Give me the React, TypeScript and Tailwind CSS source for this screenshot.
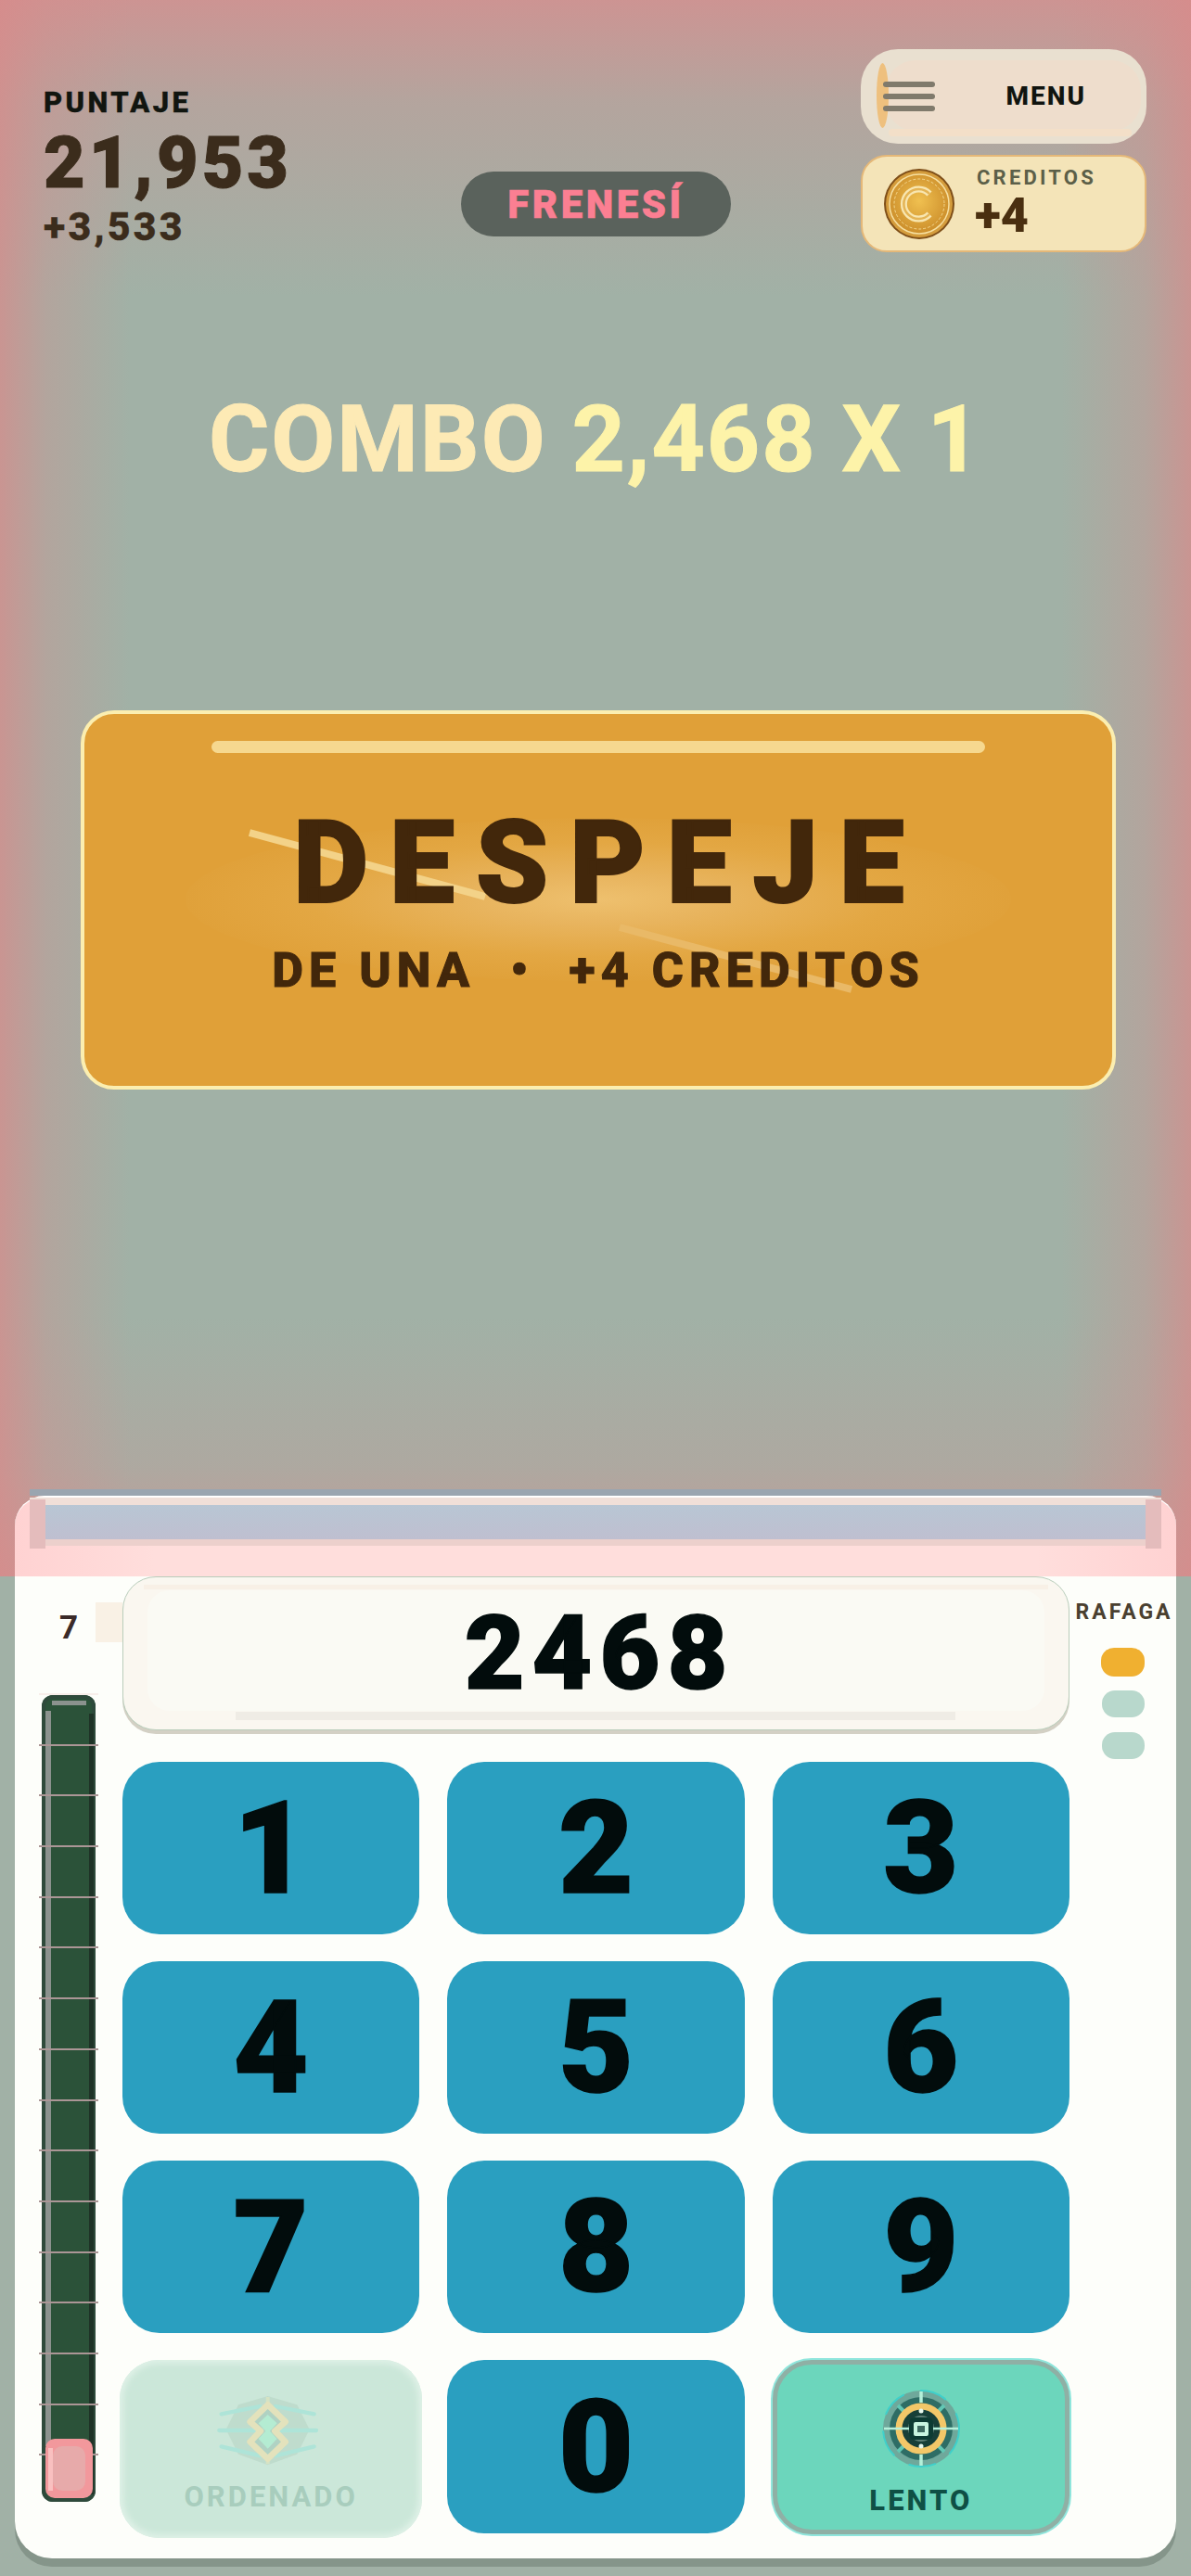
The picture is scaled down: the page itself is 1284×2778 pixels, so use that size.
// Pantalla de juego: HUD, aviso de despeje y teclado numerico
const KEYS = ["1", "2", "3", "4", "5", "6", "7", "8", "9"];
const METER_LINES = Array.from({ length: 16 }, (_, i) => i);

function Coin() {
  return (
    <svg width="78" height="78" viewBox="0 0 78 78" className="shrink-0">
      <defs>
        <radialGradient id="coinFill" cx="50%" cy="45%" r="60%">
          <stop offset="0%" stopColor="#f0c050" />
          <stop offset="100%" stopColor="#c98a28" />
        </radialGradient>
      </defs>
      <circle cx="39" cy="39" r="38" fill="#7e4e18" />
      <circle cx="39" cy="39" r="36" fill="#d49c3c" />
      <circle cx="39" cy="39" r="32" fill="url(#coinFill)" stroke="#f6dfa0" strokeWidth="1.5" />
      <circle cx="39" cy="39" r="27" fill="none" stroke="#f3d78f" strokeWidth="1" strokeDasharray="3 2" />
      <path d="M50 28 A16 16 0 1 0 50 50" fill="none" stroke="#f8e6b0" strokeWidth="7" strokeLinecap="butt" />
      <path d="M50 28 A16 16 0 1 0 50 50" fill="none" stroke="#e4b455" strokeWidth="2.5" />
    </svg>
  );
}

function OrdenadoIcon() {
  return (
    <svg width="150" height="100" viewBox="0 0 450 300" className="block">
      <polygon points="80,150 120,70 215,42 310,70 350,150 310,230 215,265 120,230" fill="#bfdccd" />
      <g stroke="#aee4d8" strokeWidth="13" strokeLinecap="round">
        <line x1="65" y1="100" x2="190" y2="75" />
        <line x1="365" y1="100" x2="240" y2="75" />
        <line x1="58" y1="153" x2="372" y2="153" />
        <line x1="65" y1="205" x2="190" y2="235" />
        <line x1="365" y1="205" x2="240" y2="235" />
      </g>
      <line x1="215" y1="45" x2="215" y2="262" stroke="#d5e3c4" strokeWidth="12" />
      <polygon
        points="215,70 272,125 238,155 272,190 215,245 158,190 192,155 158,125"
        fill="#b0d2c3"
        stroke="#e3e2bc"
        strokeWidth="20"
        strokeLinejoin="round"
      />
      <polygon points="215,102 245,130 222,155 245,180 215,212 185,180 208,155 185,130" fill="#b4ecd2" />
    </svg>
  );
}

function LentoIcon() {
  return (
    <svg width="86" height="86" viewBox="9 9 86 86" className="block">
      <circle cx="52" cy="52" r="41" fill="#6fa89b" />
      <circle cx="52" cy="52" r="41" fill="none" stroke="#3fd0cb" strokeWidth="2" strokeDasharray="30 18" />
      <circle cx="52" cy="52" r="34" fill="#2e6d65" />
      <g stroke="#62c7b4" strokeWidth="4">
        <line x1="27" y1="27" x2="36" y2="36" />
        <line x1="77" y1="27" x2="68" y2="36" />
        <line x1="27" y1="77" x2="36" y2="68" />
        <line x1="77" y1="77" x2="68" y2="68" />
      </g>
      <circle cx="52" cy="52" r="24" fill="#173f38" stroke="#f3c768" strokeWidth="7" />
      <circle cx="52" cy="52" r="14" fill="#5d7f76" />
      <g stroke="#b5f0da" strokeWidth="3.5">
        <line x1="52" y1="12" x2="52" y2="24" />
        <line x1="52" y1="80" x2="52" y2="92" />
        <line x1="12" y1="52" x2="92" y2="52" strokeWidth="2.5" />
      </g>
      <circle cx="52" cy="33" r="2.5" fill="#e8f8ee" />
      <circle cx="52" cy="71" r="2.5" fill="#e8f8ee" />
      <rect x="39" y="40" width="26" height="24" rx="6" fill="#0d3b33" />
      <rect x="44" y="45" width="16" height="15" rx="2" fill="#c8f5e0" />
      <rect x="48" y="49" width="8" height="7" fill="#3d6a60" />
    </svg>
  );
}

function Meter() {
  return (
    <div className="relative mt-[52px] h-[870px] w-[58px] overflow-visible rounded-[12px] bg-[#2b5239] shadow-[inset_0_0_0_4px_#2e4a3b]">
      <div className="absolute left-[4px] top-[17px] bottom-[60px] w-[6px] bg-[#8b928e]" />
      <div className="absolute left-[11px] top-[6px] h-[5px] w-[37px] bg-[#8b928e]" />
      <div className="absolute right-[2px] top-[20px] bottom-[8px] w-[5px] bg-[#1f3327]" />
      {/* marcas de la barra */}
      <div className="absolute -left-[3px] -right-[3px] -top-[2px] flex flex-col gap-[52.7px]">
        {METER_LINES.map((n) => (
          <div key={n} className={n === 0 ? "h-[2px] bg-[#f8eeea]" : "h-[2px] bg-[#ab9696]"} />
        ))}
      </div>
      {/* nivel */}
      <div className="absolute bottom-[4px] left-[4px] right-[3px] h-[64px] rounded-[10px] bg-[#f2989c] p-[8px]">
        <div className="h-full rounded-[10px] bg-[#e7aaaa]" />
        <div className="absolute left-[3px] top-[10px] h-[46px] w-[5px] bg-[#f9c0c0]" />
      </div>
    </div>
  );
}

export default function App() {
  return (
    <div className="flex h-[2778px] w-[1284px] flex-col overflow-hidden bg-[#a1b1a6] font-['Roboto',sans-serif]">
      {/* Zona superior con vineta roja */}
      <section className="flex h-[1700px] flex-col bg-[linear-gradient(to_right,#d98a8ab8,#d98a8a50_50px,#d98a8a00_140px),linear-gradient(to_left,#d98a8ab8,#d98a8a50_50px,#d98a8a00_140px),linear-gradient(to_bottom,#d39090e0,#d3909060_110px,#d3909000_320px),linear-gradient(to_top,#d39090c0,#d3909040_120px,#d3909000_280px)]">
        {/* HUD */}
        <div className="flex items-start pt-[53px]">
          <div className="ml-[47px] w-[450px] pt-[43px] text-[#3b2c1c]">
            <div className="text-[31px] font-extrabold leading-[30px] tracking-[3.4px] text-[#11150f] [-webkit-text-stroke:0.5px]">PUNTAJE</div>
            <div className="mt-[12px] text-[77px] font-black leading-[76px] tracking-[4px] [-webkit-text-stroke:1px]">21,953</div>
            <div className="mt-[9px] text-[43px] font-extrabold leading-[42px] tracking-[3.2px] [-webkit-text-stroke:0.5px]">+3,533</div>
          </div>
          <div className="mt-[132px] flex h-[70px] w-[291px] items-center justify-center rounded-full bg-[#5a625c] text-[42px] font-black tracking-[3.5px] text-[#fb7f92] [-webkit-text-stroke:0.5px]">
            FRENESÍ
          </div>
          <div className="ml-[140px] flex w-[308px] flex-col gap-[12px]">
            <div className="relative flex h-[102px] items-center justify-end rounded-[40px] bg-[#e9e0d0] pr-[65px]">
              <div className="absolute bottom-[14px] left-[27px] right-[6px] top-[12px] rounded-[32px] bg-[#eeddcc]" />
              <div className="absolute bottom-[8px] left-[30px] right-[16px] h-[8px] rounded-full bg-[#f3dfc8]" />
              <div className="absolute bottom-[17px] left-[17px] top-[15px] w-[13px] rounded-[50%] bg-[#eec07e]" />
              <div className="absolute left-[24px] top-[35px] flex w-[56px] flex-col gap-[7px]">
                <div className="h-[6px] rounded-full bg-[#807a6c]" />
                <div className="h-[6px] rounded-full bg-[#807a6c]" />
                <div className="h-[6px] rounded-full bg-[#807a6c]" />
              </div>
              <span className="relative text-[28px] font-extrabold tracking-[2px] text-[#10140f]">MENU</span>
            </div>
            <div className="flex h-[105px] items-center gap-[21px] rounded-[28px] border-2 border-[#e5b878] bg-[#f4e4b8] pl-[22px]">
              <Coin />
              <div className="-mt-[2px]">
                <div className="ml-[2px] text-[22px] font-bold leading-[24px] tracking-[3.2px] text-[#5c5f48]">CREDITOS</div>
                <div className="mt-[4px] text-[52px] font-black leading-[50px] text-[#4a2f10]">+4</div>
              </div>
            </div>
          </div>
        </div>

        {/* Combo */}
        <div className="mt-[147px] text-center text-[100px] font-bold leading-[110px] tracking-[2px] text-[#fdeab5] [-webkit-text-stroke:1px]">
          COMBO <span className="text-[#fdf3a9]">2,468 X 1</span>
        </div>

        {/* Tarjeta de despeje */}
        <div className="relative ml-[87px] mt-[237px] h-[409px] w-[1116px] overflow-hidden rounded-[36px] border-4 border-[#fbeeb0] bg-[#e0a038] text-center text-[#42270b]">
          <svg className="absolute left-[-4px] top-[-4px]" width="1116" height="409" viewBox="87 766 1116 409">
            <defs>
              <radialGradient id="glow">
                <stop offset="0%" stopColor="#eec06e" />
                <stop offset="30%" stopColor="#e8b45e" />
                <stop offset="70%" stopColor="#e3a743" />
                <stop offset="100%" stopColor="#e0a13a" />
              </radialGradient>
            </defs>
            <ellipse cx="645" cy="970" rx="445" ry="88" fill="url(#glow)" />
            <line x1="269" y1="898" x2="523" y2="967" stroke="#f3d288" strokeWidth="8" />
            <line x1="668" y1="1000" x2="918" y2="1067" stroke="#e9b967" strokeWidth="8" />
          </svg>
          <div className="absolute left-[137px] top-[29px] h-[13px] w-[834px] rounded-full bg-[#f6d88f]" />
          <div className="relative pl-[24px] pt-[96px] text-[125px] font-black leading-[130px] tracking-[23px] [-webkit-text-stroke:2px]">DESPEJE</div>
          <div className="relative mt-[21px] text-[52px] font-extrabold leading-[60px] tracking-[6.1px] [-webkit-text-stroke:1px]">
            DE UNA &nbsp;•&nbsp; +4 CREDITOS
          </div>
        </div>

        {/* Borde rosa del panel */}
        <div className="relative mx-4 mt-auto h-[87px] rounded-t-[32px] border-t-2 border-white bg-[linear-gradient(to_right,#ffd2d2,#ffdedc_12%,#ffdedc_88%,#ffd2d2)] px-4">
          <div className="absolute -top-[9px] left-4 right-4 h-[7px] bg-[#9aa5b0]" />
          <div className="h-[8px] bg-[#f0dfd8]" />
          <div className="h-[37px] bg-[linear-gradient(to_bottom,#b8c6d4,#bfbfd0)]" />
          <div className="h-[7px] bg-[#ecd0cc]" />
          <div className="absolute left-4 top-[2px] h-[53px] w-[17px] bg-[#e4bcbc]" />
          <div className="absolute right-4 top-[2px] h-[53px] w-[17px] bg-[#e4bcbc]" />
        </div>
      </section>

      {/* Panel del teclado */}
      <section className="mx-4 flex h-[1059px] rounded-b-[40px] bg-[#fdfefa] shadow-[0_9px_0_#85958a]">
        <div className="relative w-[116px] pl-[29px] pt-[36px]">
          <div className="absolute left-[87px] top-[28px] h-[43px] w-[29px] bg-[#f9f1e5]" />
          <div className="w-[58px] text-center text-[35px] font-bold leading-[40px] text-[#3a2a28]">7</div>
          <Meter />
        </div>

        <div className="w-[1021px]">
          {/* Visor */}
          <div className="relative flex h-[166px] items-center justify-center rounded-[36px] border border-[#b9cdbb] bg-[#faf7f0] shadow-[0_4px_0_#d3d0c4]">
            <div className="absolute left-[22px] right-[22px] top-[8px] h-[5px] bg-[#f8f0e6]" />
            <div className="absolute bottom-[20px] left-[26px] right-[26px] top-[14px] rounded-[24px] bg-[#fafaf4]" />
            <div className="absolute bottom-[10px] left-[121px] h-[9px] w-[776px] bg-[#efece5]" />
            <span className="relative pl-[8px] text-[112px] font-black leading-none tracking-[8px] text-[#020c0c] [-webkit-text-stroke:1.5px]">2468</span>
          </div>

          {/* Teclas */}
          <div className="mt-[34px] grid grid-cols-3 gap-x-[30px] gap-y-[29px]">
            {KEYS.map((key) => (
              <div
                key={key}
                className="flex h-[186px] items-center justify-center rounded-[40px] bg-[#2a9fc0] text-[140px] font-black leading-none text-[#020c0c] [-webkit-text-stroke:1.5px]"
              >
                {key}
              </div>
            ))}
            <div className="-mx-[3px] h-[192px] rounded-[42px] bg-[#cbe7d9] pt-[25px] text-center shadow-[inset_0_0_6px_4px_#dff1e7]">
              <div className="flex justify-center">
                <OrdenadoIcon />
              </div>
              <div className="mt-[6px] text-[31px] font-bold leading-[34px] tracking-[3px] text-[#a8cdbd]">ORDENADO</div>
            </div>
            <div className="flex h-[187px] items-center justify-center rounded-[40px] bg-[#2a9fc0] text-[140px] font-black leading-none text-[#020c0c] [-webkit-text-stroke:1.5px]">
              0
            </div>
            <div className="h-[188px] rounded-[42px] border-[5px] border-[#8fb0a5] bg-[#6cd6bc] pt-[26px] text-center shadow-[0_0_0_2px_#8fe6dc]">
              <div className="flex justify-center">
                <LentoIcon />
              </div>
              <div className="mt-[18px] text-[31px] font-extrabold leading-[34px] tracking-[3px] text-[#0f5045]">LENTO</div>
            </div>
          </div>
        </div>

        {/* Rafaga */}
        <div className="flex w-[115px] flex-col items-center pt-[27px]">
          <div className="pl-[3px] text-[23px] font-bold leading-[24px] tracking-[3px] text-[#4a4030]">RAFAGA</div>
          <div className="mt-[26px] h-[31px] w-[47px] rounded-[14px] bg-[#f0b030]" />
          <div className="mt-[15px] h-[29px] w-[46px] rounded-[14px] bg-[#b8d8cc]" />
          <div className="mt-[16px] h-[29px] w-[46px] rounded-[14px] bg-[#b8d8cc]" />
        </div>
      </section>
    </div>
  );
}
